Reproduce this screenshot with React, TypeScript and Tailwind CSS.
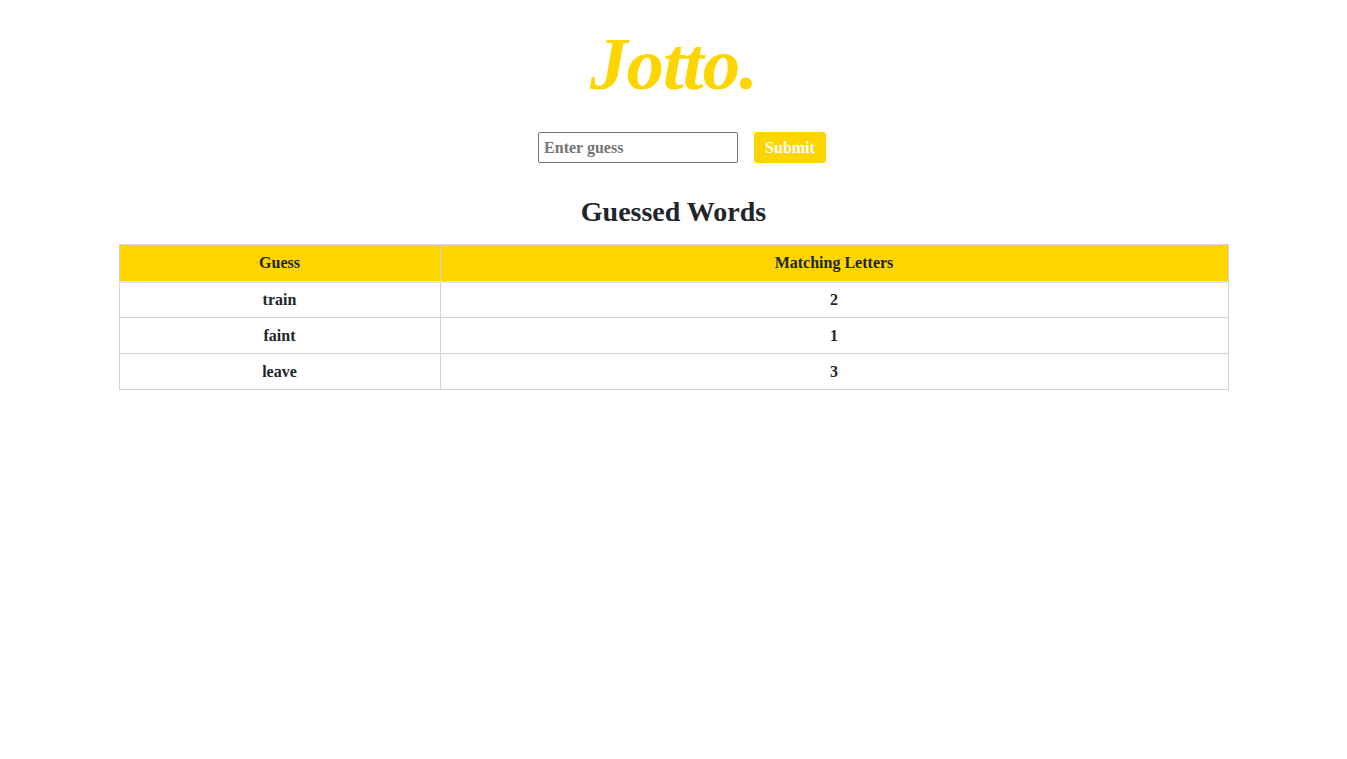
import React from "react";

export default function App() {
  const rows = [
    { g: "train", m: 2 },
    { g: "faint", m: 1 },
    { g: "leave", m: 3 },
  ];
  return (
    <div className="min-h-[759px] bg-white text-[#212529] font-['Liberation_Serif',serif]">
      <div className="mx-auto w-[1140px] px-[15px] flex flex-col items-center">
        <h1 className="mt-[23px] h-[82px] text-[75px] leading-[82px] italic font-bold text-[#ffd500] tracking-[-1px]">
          Jotto.
        </h1>
        <form className="mt-[27px] pl-[17px] flex items-center gap-4" onSubmit={(e) => e.preventDefault()}>
          <input
            placeholder="Enter guess"
            className="w-[200px] h-[31px] border border-[#767676] rounded-[2px] px-[5px] text-[16px] font-bold placeholder:text-[#757575] outline-none"
          />
          <button className="h-[31px] px-[11px] rounded-[3px] bg-[#ffd500] text-white text-[16px] font-bold">
            Submit
          </button>
        </form>
        <h2 className="mt-[31px] text-[28px] leading-[36px] font-bold">Guessed Words</h2>
        <table className="mt-[14px] w-full border-collapse text-[16px] font-bold">
          <thead>
            <tr className="bg-[#ffd500]">
              <th className="w-[321px] h-[37px] border border-[#d4d4d4] border-b-2 border-b-[#dee2e6] text-center">Guess</th>
              <th className="h-[37px] border border-[#d4d4d4] border-b-2 border-b-[#dee2e6] text-center">Matching Letters</th>
            </tr>
          </thead>
          <tbody>
            {rows.map((r) => (
              <tr key={r.g}>
                <td className="h-[36px] border border-[#d4d4d4] text-center">{r.g}</td>
                <td className="h-[36px] border border-[#d4d4d4] text-center">{r.m}</td>
              </tr>
            ))}
          </tbody>
        </table>
      </div>
    </div>
  );
}
